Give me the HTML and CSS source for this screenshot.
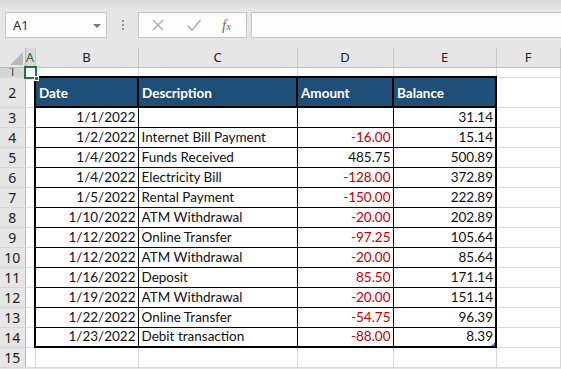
FILE: index.html
```html
<!DOCTYPE html>
<html lang="en">
<head>
    <meta charset="UTF-8">
    <meta name="viewport" content="width=device-width, initial-scale=1.0">
    <title>Bank statement - sheet</title>
    <link rel="stylesheet" href="styles.css">
</head>
<body>

    <div class="toolbar">
        <div class="namebox">
            <span>A1</span>
            <span class="caret"></span>
        </div>
        <div class="grip"><span></span><span></span><span></span></div>
        <div class="fbtns">
            <svg class="btn" width="14" height="14" viewBox="0 0 14 14">
                <path d="M2 2 L12 12 M12 2 L2 12" stroke="#b3b3b3" stroke-width="1.6" fill="none"/>
            </svg>
            <svg class="btn" width="16" height="14" viewBox="0 0 16 14">
                <path d="M1.5 7.5 L6 12 L14.5 2" stroke="#b3b3b3" stroke-width="1.6" fill="none"/>
            </svg>
            <span class="fx">f<span>x</span></span>
        </div>
        <div class="formula"></div>
    </div>

    <div class="grid-wrap">
    <table class="sheet">
        <colgroup>
            <col class="w-hdr"><col class="w-a"><col class="w-b"><col class="w-c">
            <col class="w-d"><col class="w-e"><col class="w-f"><col class="w-g">
        </colgroup>
        <thead>
            <tr>
                <th class="corner"><span class="tri"></span></th>
                <th class="sel">A</th><th>B</th><th>C</th><th>D</th><th>E</th><th>F</th><th></th>
            </tr>
        </thead>
        <tbody>
            <tr class="r1">
                <th class="sel"><div class="clip">1</div></th>
                <td class="a1"><div class="cursor"><span class="handle"></span></div></td>
                <td></td><td></td><td></td><td></td><td></td><td></td>
            </tr>
            <tr class="r2">
                <th>2</th><td></td>
                <td class="h">Date</td><td class="h">Description</td><td class="h">Amount</td><td class="h">Balance</td>
                <td></td><td></td>
            </tr>
            <tr><th>3</th><td></td><td class="t l num">1/1/2022</td><td class="t"></td><td class="t num"></td><td class="t r num">31.14</td><td></td><td></td></tr>
            <tr><th>4</th><td></td><td class="t l num">1/2/2022</td><td class="t">Internet Bill Payment</td><td class="t num neg">-16.00</td><td class="t r num">15.14</td><td></td><td></td></tr>
            <tr><th>5</th><td></td><td class="t l num">1/4/2022</td><td class="t">Funds Received</td><td class="t num">485.75</td><td class="t r num">500.89</td><td></td><td></td></tr>
            <tr><th>6</th><td></td><td class="t l num">1/4/2022</td><td class="t">Electricity Bill</td><td class="t num neg">-128.00</td><td class="t r num">372.89</td><td></td><td></td></tr>
            <tr><th>7</th><td></td><td class="t l num">1/5/2022</td><td class="t">Rental Payment</td><td class="t num neg">-150.00</td><td class="t r num">222.89</td><td></td><td></td></tr>
            <tr><th>8</th><td></td><td class="t l num">1/10/2022</td><td class="t">ATM Withdrawal</td><td class="t num neg">-20.00</td><td class="t r num">202.89</td><td></td><td></td></tr>
            <tr><th>9</th><td></td><td class="t l num">1/12/2022</td><td class="t">Online Transfer</td><td class="t num neg">-97.25</td><td class="t r num">105.64</td><td></td><td></td></tr>
            <tr><th>10</th><td></td><td class="t l num">1/12/2022</td><td class="t">ATM Withdrawal</td><td class="t num neg">-20.00</td><td class="t r num">85.64</td><td></td><td></td></tr>
            <tr><th>11</th><td></td><td class="t l num">1/16/2022</td><td class="t">Deposit</td><td class="t num neg">85.50</td><td class="t r num">171.14</td><td></td><td></td></tr>
            <tr><th>12</th><td></td><td class="t l num">1/19/2022</td><td class="t">ATM Withdrawal</td><td class="t num neg">-20.00</td><td class="t r num">151.14</td><td></td><td></td></tr>
            <tr><th>13</th><td></td><td class="t l num">1/22/2022</td><td class="t">Online Transfer</td><td class="t num neg">-54.75</td><td class="t r num">96.39</td><td></td><td></td></tr>
            <tr class="last"><th>14</th><td></td><td class="t l num">1/23/2022</td><td class="t">Debit transaction</td><td class="t num neg">-88.00</td><td class="t r num flag">8.39<span class="mark"></span></td><td></td><td></td></tr>
            <tr><th>15</th><td></td><td></td><td></td><td></td><td></td><td></td><td></td></tr>
        </tbody>
    </table>
    </div>

</body>
</html>
```

FILE: styles.css
```css
* {
    box-sizing: border-box;
}
html, body {
    margin: 0;
    padding: 0;
}
body {
    width: 561px;
    height: 369px;
    overflow: hidden;
    background: #e6e6e6;
    font-family: 'Lato', 'Noto Sans', sans-serif;
}

/* formula bar */
.toolbar {
    height: 48px;
    display: flex;
    align-items: flex-start;
    padding: 12px 0 0 5px;
    background: linear-gradient(#d6d6d6 0, #e6e6e6 9px);
}
.namebox {
    width: 102px;
    height: 26px;
    display: flex;
    align-items: center;
    justify-content: space-between;
    padding: 0 5px 0 7px;
    background: #fdfdfd;
    border: 1px solid #c6c6c6;
    font-family: 'Noto Sans', sans-serif;
    font-size: 13px;
    color: #333;
}
.caret {
    border-left: 4px solid transparent;
    border-right: 4px solid transparent;
    border-top: 4px solid #777;
    margin-top: 1px;
}
.grip {
    width: 31px;
    display: flex;
    flex-direction: column;
    align-items: center;
    gap: 2px;
    padding-top: 8px;
}
.grip span {
    width: 2px;
    height: 2px;
    background: #9a9a9a;
}
.fbtns {
    width: 109px;
    height: 26px;
    display: flex;
    align-items: center;
    padding-left: 12px;
    gap: 21px;
    background: #fdfdfd;
    border: 1px solid #c6c6c6;
}
.fx {
    font-family: 'Liberation Serif', serif;
    font-style: italic;
    font-size: 15px;
    color: #6f6f6f;
    margin-left: -1px;
}
.fx span {
    font-size: 11px;
}
.formula {
    flex: 1;
    height: 26px;
    margin-left: 4px;
    margin-right: -4px;
    background: #fdfdfd;
    border: 1px solid #c6c6c6;
}

/* sheet grid */
.grid-wrap {
    height: 321px;
    overflow: hidden;
}
.sheet {
    table-layout: fixed;
    border-collapse: collapse;
    width: 621px;
    background: #fff;
}
.w-hdr { width: 25px; }
.w-a { width: 10px; }
.w-b { width: 103px; }
.w-c { width: 159px; }
.w-d { width: 96px; }
.w-e { width: 103px; }
.w-f { width: 64px; }
.w-g { width: 61px; }

.sheet th, .sheet td {
    line-height: 15px;
}
.sheet th {
    background: #e6e6e6;
    font-family: 'Noto Sans', sans-serif;
    font-weight: normal;
    font-size: 13px;
    color: #222;
    padding: 0;
}
.sheet thead th {
    height: 19px;
    border-right: 1px solid #c8c8c8;
    border-bottom: 1px solid #bcbcbc;
}
.sheet thead th.corner {
    position: relative;
    border-right: 1px solid #bcbcbc;
}
.tri {
    position: absolute;
    right: 2px;
    bottom: 2px;
    border-left: 13px solid transparent;
    border-bottom: 13px solid #b9b9b9;
}
.sheet thead th.sel {
    color: #217346;
    background: #d9d9d9;
}
.sheet tbody th {
    height: 20px;
    font-size: 14px;
    padding-top: 1px;
    border-right: 1px solid #bcbcbc;
    border-bottom: 1px solid #d8d8d8;
}
.sheet tbody th.sel {
    background: #d6d6d6;
}
.clip {
    height: 9px;
    overflow: hidden;
    line-height: 6px;
    color: #555;
}
.sheet td {
    height: 20px;
    padding: 0 3px;
    border: 1px solid #d9d9d9;
    font-size: 13.5px;
    color: #111;
    white-space: nowrap;
    overflow: hidden;
}
.sheet .r1 th, .sheet .r1 td {
    height: 10px;
    padding: 0;
}
.sheet .r2 th, .sheet .r2 td {
    height: 30px;
}

/* selected cell */
.a1 {
    position: relative;
    overflow: visible !important;
}
.cursor {
    position: absolute;
    left: -2px;
    top: -2px;
    width: 13px;
    height: 13px;
    border: 2px solid #217346;
    z-index: 2;
}
.handle {
    position: absolute;
    right: -4px;
    bottom: -4px;
    width: 5px;
    height: 5px;
    background: #217346;
    border: 1px solid #fff;
}

/* data table */
.sheet td.h {
    background: #1f4e79;
    color: #fff;
    font-weight: bold;
    border: 2px solid #000;
    padding-top: 2px;
}
.sheet td.t {
    border: 1px solid #000;
}
.sheet td.l {
    border-left: 2px solid #000;
}
.sheet td.r {
    border-right: 2px solid #000;
}
.sheet .last td.t {
    border-bottom: 2px solid #000;
}
.num {
    text-align: right;
    padding-right: 2px !important;
}
.neg {
    color: #c00000 !important;
}
.flag {
    position: relative;
}
.mark {
    position: absolute;
    right: 0;
    bottom: 0;
    border-left: 4px solid transparent;
    border-bottom: 4px solid #5a7fc2;
}
```
